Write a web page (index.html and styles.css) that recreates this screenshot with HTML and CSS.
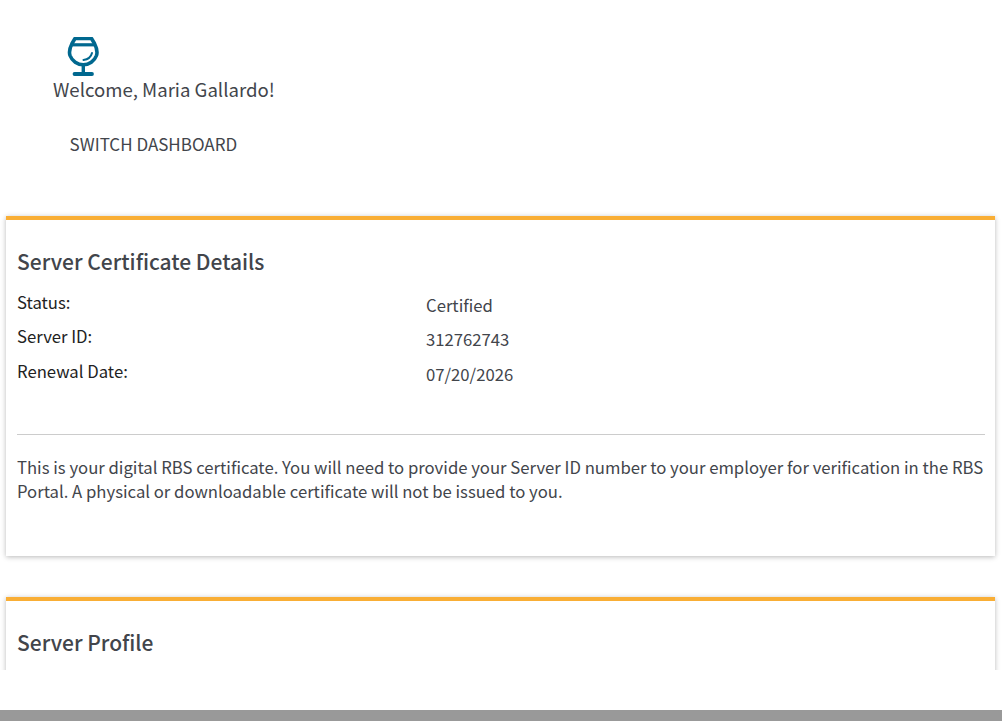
FILE: index.html
```html
<!DOCTYPE html>
<html lang="en">
<head>
<meta charset="utf-8">
<title>Dashboard</title>
<link rel="stylesheet" href="styles.css">
</head>
<body>
<div class="app">
  <main class="scroller">
    <header class="welcome">
      <svg class="glass" viewBox="0 0 32 40" width="32" height="40" aria-hidden="true">
        <path d="M8 1.500H24.500L27.500 6.500C29.800 11 30.800 14.500 29.500 18.500C27.500 24 22 27.800 16.300 27.800C10.500 27.800 5 24 3 18.500C1.700 14.500 2.700 11 5 6.500Z" fill="none" stroke="#00688f" stroke-width="3.600" stroke-linejoin="round"/>
        <path d="M4 7.800H28.500" fill="none" stroke="#00688f" stroke-width="3.200"/>
        <path d="M16.300 28V36" fill="none" stroke="#00688f" stroke-width="3.400"/>
        <path d="M7.500 37H25" fill="none" stroke="#00688f" stroke-width="3.800" stroke-linecap="round"/>
        <path d="M16.500 23C20.500 22.500 24 20 25 16" fill="none" stroke="#00688f" stroke-width="2" stroke-linecap="round"/>
      </svg>
      <div class="greeting">Welcome, Maria Gallardo!</div>
      <div class="switch">SWITCH DASHBOARD</div>
    </header>
    <section class="card first">
      <h2>Server Certificate Details</h2>
      <dl class="details">
        <dt>Status:</dt><dd>Certified</dd>
        <dt>Server ID:</dt><dd>312762743</dd>
        <dt>Renewal Date:</dt><dd>07/20/2026</dd>
      </dl>
      <hr>
      <p>This is your digital RBS certificate. You will need to provide your Server ID number to your employer for verification in the RBS Portal. A physical or downloadable certificate will not be issued to you.</p>
    </section>
    <section class="card">
      <h2>Server Profile</h2>
    </section>
  </main>
  <div class="footer"></div>
</div>
</body>
</html>
```
FILE: styles.css
```css
html, body { margin: 0; height: 100%; background: #fff; }
body { font-family: "Noto Sans CJK SC", "Noto Sans", sans-serif; color: #42454b; overflow: hidden; }
.app { height: 721px; display: flex; flex-direction: column; }
.scroller { height: 670px; overflow: hidden; flex: none; padding: 0 6px 0 6px; box-sizing: border-box; width: 1001px; }
.welcome { height: 216px; padding-top: 37px; box-sizing: border-box; }
.glass { display: block; margin-left: 61px; }
.greeting { font-size: 18.600px; line-height: 26px; margin: -1px 0 0 47px; }
.switch { font-size: 17px; line-height: 24px; margin: 30px 0 0 63.600px; }
.card { background: #fff; border-top: 4px solid #f9ae35; box-shadow: 0 1px 5px rgba(0,0,0,.28); padding: 0 10px 0 11px; margin-bottom: 41px; height: 340px; box-sizing: border-box; }
h2 { margin: 0; padding-top: 26px; font-size: 21px; line-height: 30px; font-weight: 500; }
.details { margin: 13.700px 0 0; display: grid; grid-template-columns: 409px 1fr; font-size: 16.700px; }
dt { color: #222; line-height: 24px; height: 34.500px; }
dd { margin: 0; line-height: 24px; padding-top: 3px; height: 34.500px; box-sizing: border-box; }
hr { border: 0; border-top: 1px solid #ccc; margin: 41px 0 0; }
p { margin: 20.300px 0 0; font-size: 16.700px; line-height: 24px; }
.footer { margin-top: 40px; height: 11px; background: #999; }
```
